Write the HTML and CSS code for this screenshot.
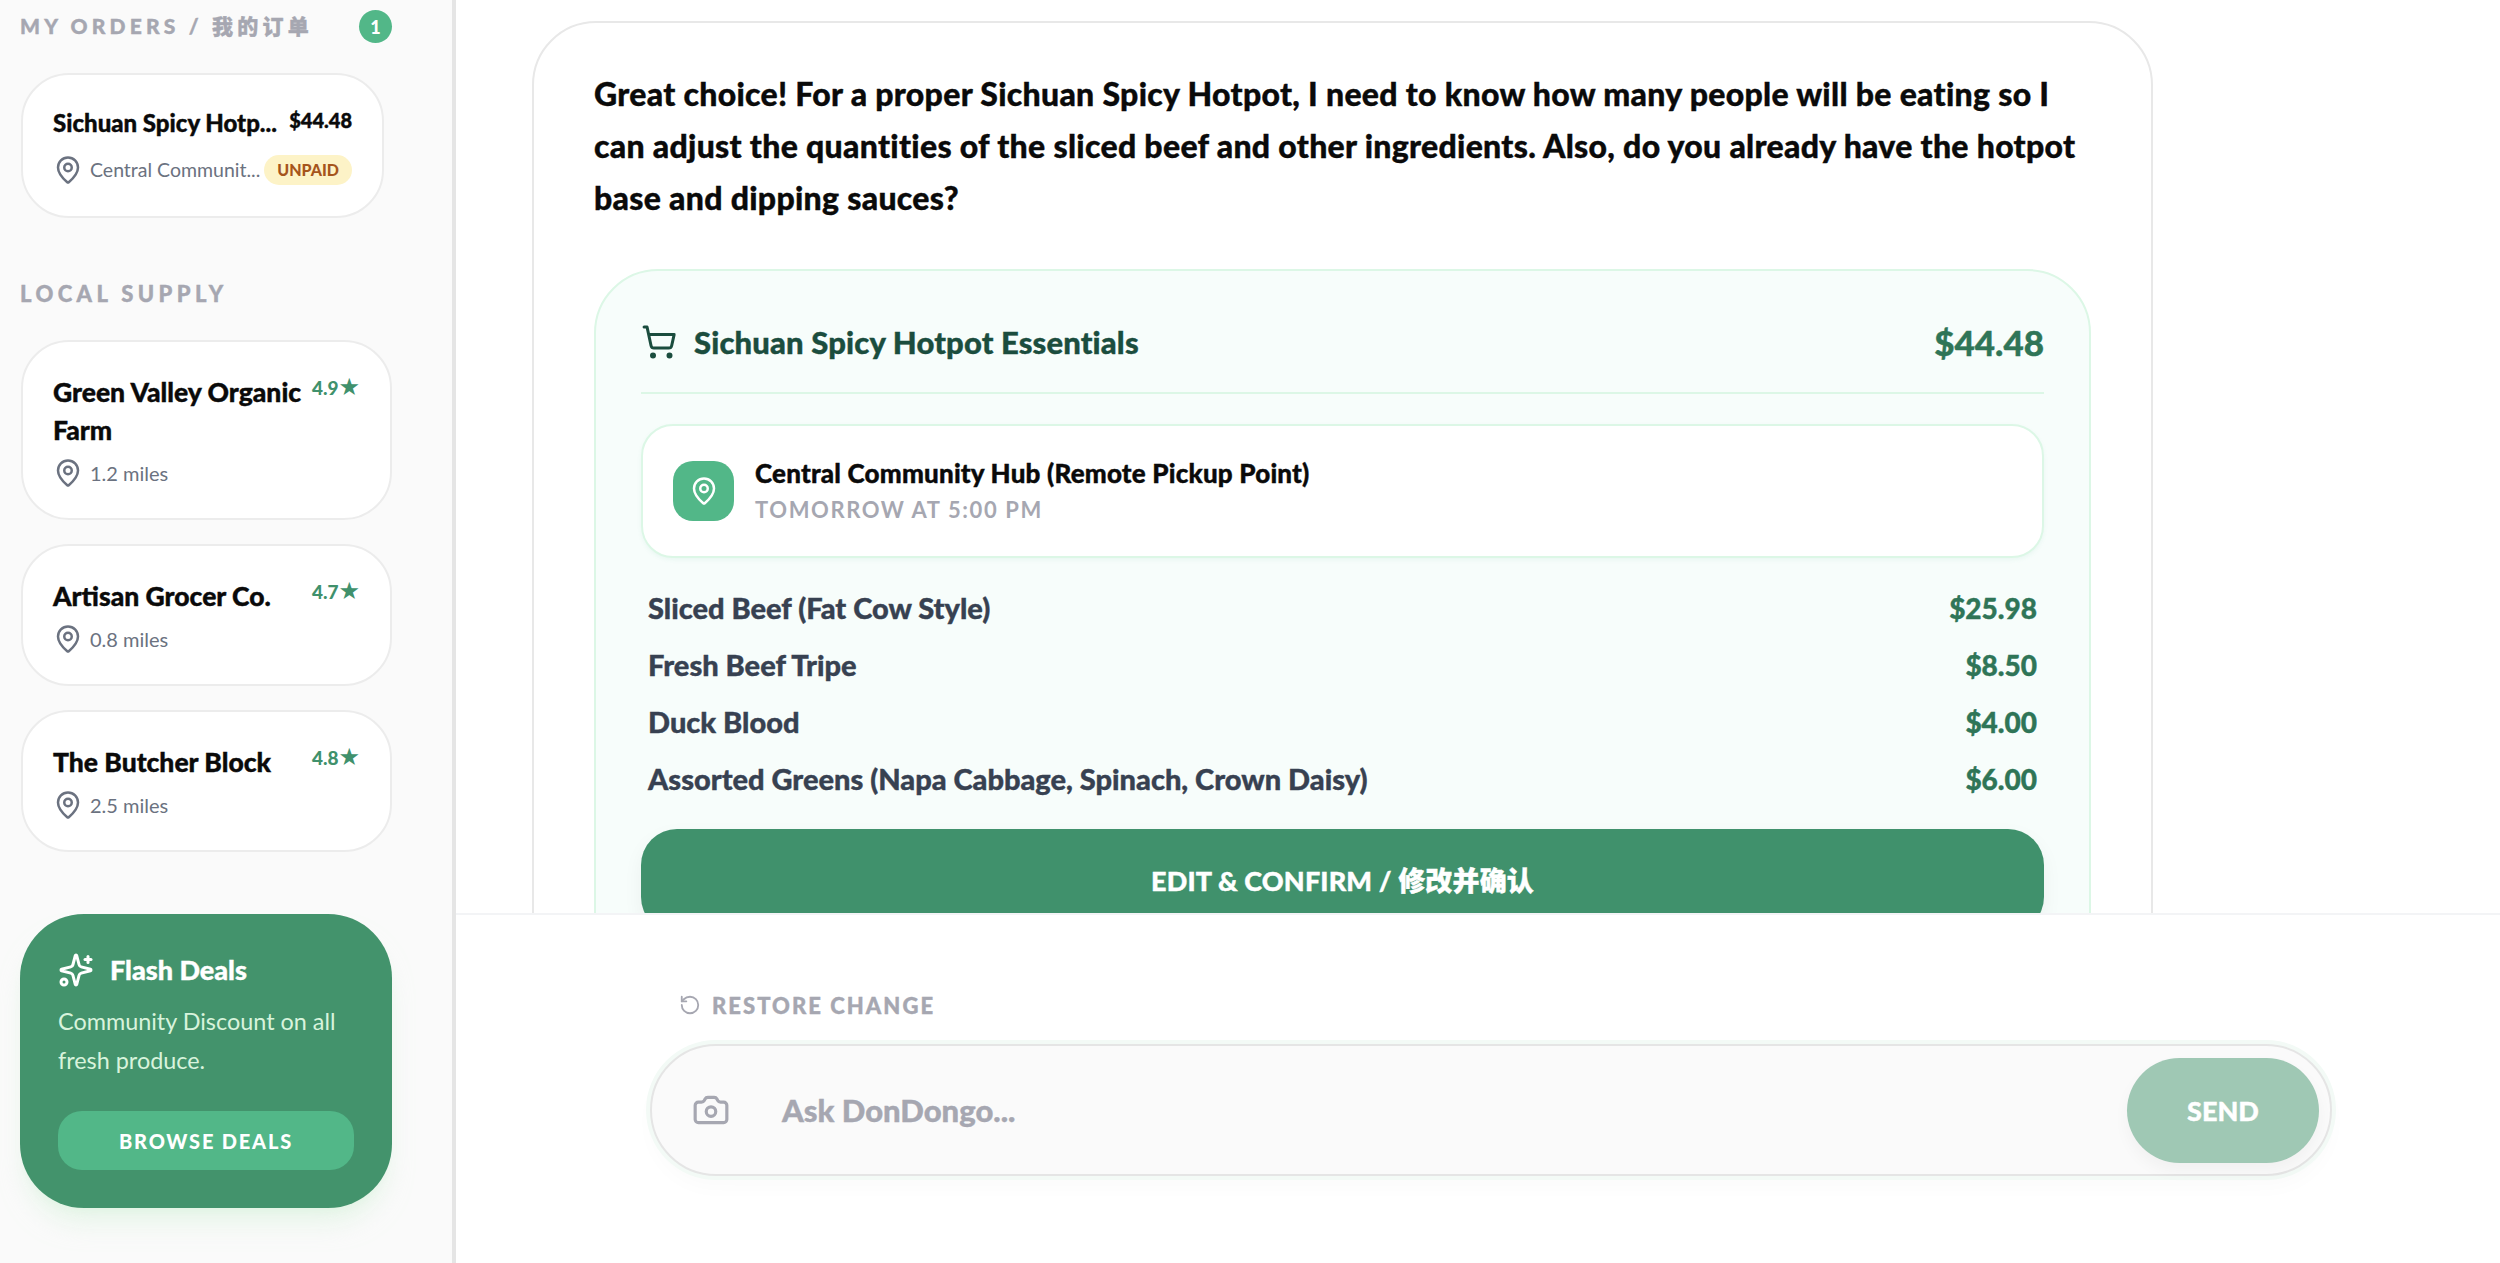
FILE: index.html
```html
<!DOCTYPE html>
<html lang="en">
<head>
  <meta charset="UTF-8">
  <meta name="viewport" content="width=device-width, initial-scale=1.0">
  <title>DonDongo</title>
  <link rel="stylesheet" href="styles.css">
</head>
<body>
  <svg class="sprite" aria-hidden="true">
    <symbol id="pin" viewBox="0 0 24 24"><path d="M20 10c0 4.993-5.539 10.193-7.399 11.799a1 1 0 0 1-1.202 0C9.539 20.193 4 14.993 4 10a8 8 0 0 1 16 0"/><circle cx="12" cy="10" r="3"/></symbol>
    <symbol id="cart" viewBox="0 0 24 24"><circle cx="8" cy="21" r="1"/><circle cx="19" cy="21" r="1"/><path d="M2.05 2.05h2l2.66 12.42a2 2 0 0 0 2 1.58h9.78a2 2 0 0 0 1.95-1.57l1.65-7.43H5.12"/></symbol>
    <symbol id="sparkles" viewBox="0 0 24 24"><path d="M9.937 15.5A2 2 0 0 0 8.5 14.063l-6.135-1.582a.5.5 0 0 1 0-.962L8.5 9.936A2 2 0 0 0 9.937 8.5l1.582-6.135a.5.5 0 0 1 .963 0L14.063 8.5A2 2 0 0 0 15.5 9.937l6.135 1.581a.5.5 0 0 1 0 .964L15.5 14.063a2 2 0 0 0-1.437 1.437l-1.582 6.135a.5.5 0 0 1-.963 0z"/><path d="M20 3v4"/><path d="M22 5h-4"/><circle cx="4" cy="20" r="2"/></symbol>
    <symbol id="restore" viewBox="0 0 24 24"><path d="M3 12a9 9 0 1 0 9-9 9.75 9.75 0 0 0-6.74 2.74L3 8"/><path d="M3 3v5h5"/></symbol>
    <symbol id="camera" viewBox="0 0 24 24"><path d="M13.997 4a2 2 0 0 1 1.76 1.05l.486.9A2 2 0 0 0 18.003 7H20a2 2 0 0 1 2 2v9a2 2 0 0 1-2 2H4a2 2 0 0 1-2-2V9a2 2 0 0 1 2-2h1.997a2 2 0 0 0 1.759-1.048l.489-.904A2 2 0 0 1 10.004 4z"/><circle cx="12" cy="13" r="3"/></symbol>
  </svg>

  <div class="app">
    <aside class="sidebar">
      <div class="section-head">
        <h3 class="section-label">MY ORDERS / 我的订单</h3>
        <span class="count">1</span>
      </div>

      <div class="card order-card">
        <div class="card-top">
          <span class="order-name">Sichuan Spicy Hotp...</span>
          <span class="order-price">$44.48</span>
        </div>
        <div class="card-sub">
          <svg class="icon pin-icon"><use href="#pin"/></svg>
          <span class="order-place">Central Communit...</span>
          <span class="unpaid">UNPAID</span>
        </div>
      </div>

      <h3 class="section-label supply-label">LOCAL SUPPLY</h3>

      <div class="card supply-card">
        <div class="card-top">
          <span class="supply-name">Green Valley Organic Farm</span>
          <span class="rating">4.9<i>★</i></span>
        </div>
        <div class="card-sub">
          <svg class="icon pin-icon"><use href="#pin"/></svg>
          <span>1.2 miles</span>
        </div>
      </div>
      <div class="card supply-card">
        <div class="card-top">
          <span class="supply-name">Artisan Grocer Co.</span>
          <span class="rating">4.7<i>★</i></span>
        </div>
        <div class="card-sub">
          <svg class="icon pin-icon"><use href="#pin"/></svg>
          <span>0.8 miles</span>
        </div>
      </div>
      <div class="card supply-card">
        <div class="card-top">
          <span class="supply-name">The Butcher Block</span>
          <span class="rating">4.8<i>★</i></span>
        </div>
        <div class="card-sub">
          <svg class="icon pin-icon"><use href="#pin"/></svg>
          <span>2.5 miles</span>
        </div>
      </div>

      <div class="flash">
        <div class="flash-head">
          <svg class="icon flash-icon"><use href="#sparkles"/></svg>
          <span>Flash Deals</span>
        </div>
        <p class="flash-text">Community Discount on all fresh produce.</p>
        <button class="flash-btn" type="button">BROWSE DEALS</button>
      </div>
    </aside>

    <main class="main">
      <section class="chat">
        <div class="bubble">
          <p class="bubble-text">Great choice! For a proper Sichuan Spicy Hotpot, I need to know how many people will be eating so I can adjust the quantities of the sliced beef and other ingredients. Also, do you already have the hotpot base and dipping sauces?</p>

          <div class="basket">
            <div class="basket-head">
              <svg class="icon cart-icon"><use href="#cart"/></svg>
              <span class="basket-title">Sichuan Spicy Hotpot Essentials</span>
              <span class="basket-total">$44.48</span>
            </div>

            <div class="pickup">
              <div class="pickup-badge"><svg class="icon"><use href="#pin"/></svg></div>
              <div>
                <div class="pickup-name">Central Community Hub (Remote Pickup Point)</div>
                <div class="pickup-time">TOMORROW AT 5:00 PM</div>
              </div>
            </div>

            <ul class="items">
              <li><span>Sliced Beef (Fat Cow Style)</span><b>$25.98</b></li>
              <li><span>Fresh Beef Tripe</span><b>$8.50</b></li>
              <li><span>Duck Blood</span><b>$4.00</b></li>
              <li><span>Assorted Greens (Napa Cabbage, Spinach, Crown Daisy)</span><b>$6.00</b></li>
            </ul>

            <button class="confirm-btn" type="button">EDIT &amp; CONFIRM / 修改并确认</button>
          </div>
        </div>
      </section>

      <footer class="composer">
        <div class="restore">
          <svg class="icon restore-icon"><use href="#restore"/></svg>
          <span>RESTORE CHANGE</span>
        </div>
        <div class="ask">
          <svg class="icon camera-icon"><use href="#camera"/></svg>
          <span class="ask-text">Ask DonDongo...</span>
          <button class="send-btn" type="button">SEND</button>
        </div>
      </footer>
    </main>
  </div>
</body>
</html>
```

FILE: styles.css
```css
* {
  box-sizing: border-box;
}
html, body {
  margin: 0;
  height: 100%;
  overflow: hidden;
}
body {
  font-family: Lato, "Noto Sans CJK SC", sans-serif;
  color: #0a0a0a;
  background-color: white;
}
.sprite {
  display: none;
}
.icon {
  display: block;
  fill: none;
  stroke: currentColor;
  stroke-width: 2;
  stroke-linecap: round;
  stroke-linejoin: round;
  flex-shrink: 0;
}
button {
  font-family: inherit;
  border: none;
  cursor: pointer;
}

/* heavier look for the bold text */
.bubble-text,
.basket-title,
.basket-total,
.items li,
.supply-name,
.order-name,
.order-price,
.pickup-name,
.flash-head,
.confirm-btn,
.section-label,
.restore,
.ask-text,
.send-btn {
  -webkit-text-stroke: 0.4px currentColor;
}

.app {
  display: flex;
  height: 1263px;
}

/* sidebar */
.sidebar {
  width: 456px;
  flex-shrink: 0;
  padding: 10px 0 0 20px;
  background-color: #fafafa;
  border-right: 4px solid #e5e5e5;
}
.section-head {
  display: flex;
  align-items: center;
  justify-content: space-between;
  width: 372px;
  height: 33px;
}
.section-head .section-label {
  padding-bottom: 4px;
  font-size: 21px;
  letter-spacing: 4.2px;
}
.section-label {
  margin: 0;
  font-size: 22px;
  font-weight: 900;
  letter-spacing: 4.4px;
  color: #a6a7b1;
}
.count {
  width: 33px;
  height: 33px;
  border-radius: 50%;
  display: flex;
  align-items: center;
  justify-content: center;
  font-size: 18px;
  font-weight: 900;
  color: white;
  background-color: #52b788;
}
.card {
  background-color: white;
  border: 2px solid #ececec;
  border-radius: 48px;
}
.card-top {
  display: flex;
  justify-content: space-between;
  gap: 8px;
}
.card-sub {
  display: flex;
  align-items: center;
  gap: 7px;
  font-size: 20px;
  line-height: 28px;
  color: #6b7280;
}
.pin-icon {
  width: 30px;
  height: 30px;
  color: #6b7280;
}
.order-card {
  width: 363px;
  height: 145px;
  margin: 30px 0 0 1px;
  padding: 32px 30px 0;
}
.order-name {
  font-size: 24px;
  line-height: 32px;
  font-weight: 900;
  white-space: nowrap;
}
.order-price {
  font-size: 20px;
  line-height: 26px;
  font-weight: 900;
}
.order-card .card-sub {
  margin-top: 16px;
}
.order-place {
  flex: 1;
  min-width: 0;
  font-size: 19.5px;
  white-space: nowrap;
}
.unpaid {
  padding: 0 13px;
  height: 30px;
  line-height: 30px;
  border-radius: 15px;
  font-size: 16px;
  font-weight: 900;
  color: #a6551c;
  background-color: #fdf3c7;
}
.supply-label {
  margin-top: 62px;
  line-height: 28px;
}
.supply-card {
  width: 371px;
  margin: 0 0 0 1px;
  padding: 31px 30px 30px;
}
.supply-label + .supply-card {
  margin-top: 32px;
}
.supply-card + .supply-card {
  margin-top: 24px;
}
.supply-name {
  font-size: 26.5px;
  line-height: 38px;
  font-weight: 900;
}
.rating {
  margin-top: 1px;
  font-size: 19px;
  line-height: 26px;
  font-weight: 900;
  color: #40916c;
  white-space: nowrap;
}
.rating i {
  font-style: normal;
  font-size: 24px;
  font-family: "DejaVu Sans", sans-serif;
}
.supply-card .card-sub {
  margin-top: 9px;
}

.flash {
  width: 372px;
  height: 294px;
  margin-top: 62px;
  padding: 38px 37px 0 38px;
  border-radius: 64px;
  color: white;
  background-color: #43936c;
  box-shadow: 0 20px 25px -5px rgba(216, 243, 220, 0.55), 0 8px 10px -6px rgba(216, 243, 220, 0.55);
}
.flash-head {
  display: flex;
  align-items: center;
  gap: 16px;
  font-size: 27px;
  line-height: 36px;
  font-weight: 900;
}
.flash-icon {
  width: 36px;
  height: 36px;
}
.flash-text {
  margin: 14px 0 0;
  font-size: 23.4px;
  line-height: 39px;
  color: #d8f3dc;
}
.flash-btn {
  display: block;
  width: 296px;
  height: 59px;
  margin-top: 31px;
  border-radius: 24px;
  font-size: 20px;
  font-weight: 900;
  letter-spacing: 1.8px;
  color: white;
  background-color: #52b788;
}

/* chat */
.main {
  flex: 1;
  display: flex;
  flex-direction: column;
  min-width: 0;
}
.chat {
  height: 913px;
  overflow: hidden;
  padding: 21px 347px 0 76px;
}
.bubble {
  padding: 45px 60px 60px;
  border: 2px solid #e8e8e8;
  border-radius: 64px;
  background-color: white;
}
.bubble-text {
  margin: 0;
  font-size: 32px;
  line-height: 52px;
  font-weight: 900;
  letter-spacing: 0.3px;
}
.basket {
  margin-top: 45px;
  padding: 0 45px 40px;
  border: 2px solid #dcf7e6;
  border-radius: 64px;
  background-color: #f7fdfb;
}
.basket-head {
  display: flex;
  align-items: center;
  height: 123px;
  padding-top: 20px;
  border-bottom: 2px solid #dcf7e6;
}
.cart-icon {
  width: 36px;
  height: 36px;
  margin-right: 17px;
  color: #1b4d3e;
}
.basket-title {
  flex: 1;
  font-size: 31px;
  font-weight: 900;
  letter-spacing: 0.15px;
  color: #1b4d3e;
}
.basket-total {
  font-size: 35px;
  font-weight: 900;
  color: #2f7557;
}
.pickup {
  display: flex;
  align-items: center;
  gap: 21px;
  height: 134px;
  margin-top: 30px;
  padding-left: 30px;
  border: 2px solid #dcf7e6;
  border-radius: 32px;
  background-color: white;
  box-shadow: 0 2px 4px rgba(82, 183, 136, 0.08);
}
.pickup-badge {
  width: 61px;
  height: 60px;
  display: flex;
  align-items: center;
  justify-content: center;
  border-radius: 20px;
  color: white;
  background-color: #52b788;
}
.pickup-badge .icon {
  width: 30px;
  height: 30px;
}
.pickup-name {
  font-size: 26px;
  line-height: 34px;
  font-weight: 900;
  letter-spacing: 0.2px;
}
.pickup-time {
  margin-top: 4px;
  font-size: 22px;
  line-height: 32px;
  font-weight: 700;
  letter-spacing: 1.6px;
  color: #a6a7b1;
}
.items {
  list-style: none;
  margin: 21px 0 0;
  padding: 0 7px;
}
.items li {
  display: flex;
  justify-content: space-between;
  height: 57px;
  align-items: center;
  font-size: 29px;
  font-weight: 900;
  color: #374151;
}
.items b {
  font-size: 28px;
  font-weight: 900;
  color: #2f7557;
}
.confirm-btn {
  display: block;
  width: 100%;
  height: 104px;
  margin-top: 22px;
  padding-bottom: 4px;
  border-radius: 36px;
  font-size: 27px;
  font-weight: 900;
  letter-spacing: 0.15px;
  color: white;
  background-color: #40916c;
  box-shadow: 0 8px 20px rgba(0, 0, 0, 0.05);
}

/* bottom input */
.composer {
  flex: 1;
  padding: 0 168px 0 194px;
  border-top: 2px solid #f3f4f6;
  background-color: white;
}
.restore {
  display: flex;
  align-items: center;
  gap: 11px;
  height: 28px;
  margin: 76px 0 0 29px;
  font-size: 22px;
  font-weight: 900;
  letter-spacing: 2.05px;
  color: #a6a7b1;
}
.restore-icon {
  width: 22px;
  height: 22px;
  -webkit-text-stroke: 0;
}
.ask {
  display: flex;
  align-items: center;
  height: 132px;
  margin-top: 25px;
  padding: 0 11px 0 40px;
  border: 2px solid #e5e5e5;
  border-radius: 66px;
  background-color: #fafafa;
  box-shadow: 0 0 0 4px #f3faf6, 0 12px 20px rgba(0, 0, 0, 0.02);
}
.camera-icon {
  width: 38px;
  height: 38px;
  color: #a6a7b1;
}
.ask-text {
  flex: 1;
  margin-left: 52px;
  font-size: 31px;
  font-weight: 900;
  color: #a6a7b1;
}
.send-btn {
  width: 192px;
  height: 105px;
  border-radius: 53px;
  font-size: 27px;
  font-weight: 900;
  color: white;
  background-color: #9fc8b4;
  box-shadow: 0 8px 16px rgba(0, 0, 0, 0.04);
}
```
